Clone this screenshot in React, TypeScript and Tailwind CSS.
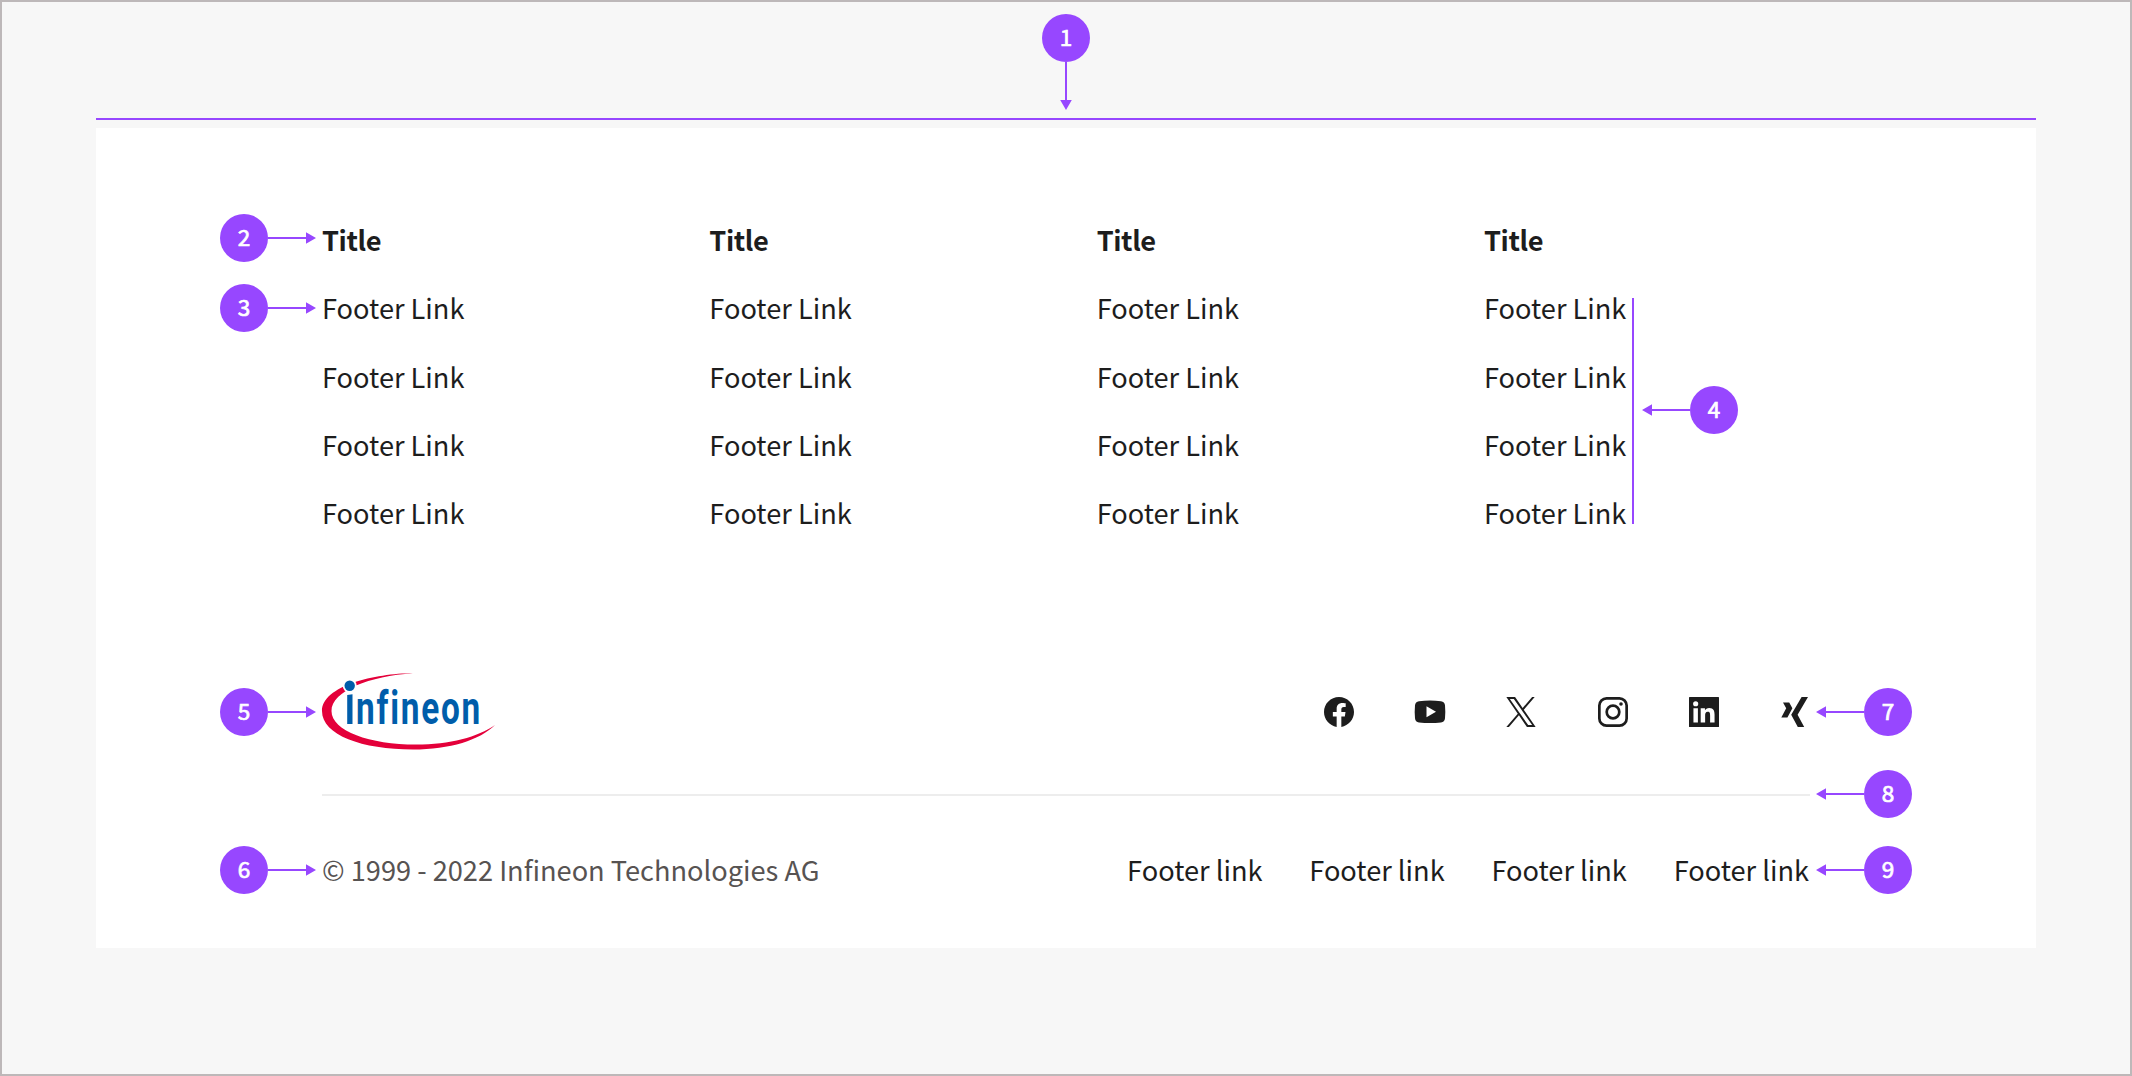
import React from "react";

const columns = [0, 1, 2, 3];
const links = [0, 1, 2, 3];

type Direction = "right" | "left" | "down";

function Arrow({ direction }: { direction: Direction }) {
  if (direction === "down") {
    return (
      <svg className="block" width="12" height="48" viewBox="0 0 12 48" fill="#9747ff">
        <path d="M5 0h2v38h4.8L6 48 .2 38H5z" />
      </svg>
    );
  }
  return (
    <svg
      className={direction === "left" ? "block rotate-180" : "block"}
      width="48"
      height="12"
      viewBox="0 0 48 12"
      fill="#9747ff"
    >
      <path d="M0 5v2h38v4.8L48 6 38 .2V5z" />
    </svg>
  );
}

function Marker({ n, direction, className }: { n: number; direction: Direction; className: string }) {
  const flow =
    direction === "down" ? "flex-col" : direction === "left" ? "flex-row-reverse" : "flex-row";
  return (
    <div className={`absolute flex items-center ${flow} ${className}`}>
      <span className="flex size-12 items-center justify-center rounded-full bg-[#9747ff] pb-[3px] text-[22.5px] leading-none text-white [-webkit-text-stroke:0.7px_#fff]">
        {n}
      </span>
      <Arrow direction={direction} />
    </div>
  );
}

function Logo() {
  return (
    <svg
      className="block overflow-visible"
      width="174"
      height="78"
      viewBox="22 24 174 78"
      aria-label="infineon"
    >
      <path
        fill="#e4003a"
        d="M113 24.3C75 24.3 22 37 22 62C22 86 62 100.5 113 100.5C150 100.5 180 91 195 76C178 88 150 95.6 116 95.6C70 95.6 31.5 82 31.5 62C31.5 42 70 27 113 24.3Z"
      />
      <circle cx="49.7" cy="36.7" r="7" fill="#fff" />
      <circle cx="49.7" cy="36.7" r="5.2" fill="#005daa" />
      <path fill="#005daa" d="M47.2 46l5.3-.8V75h-5.3z" />
      <text
        transform="translate(56 75) scale(0.71 1)"
        fill="#005daa"
        fontFamily="Roboto, sans-serif"
        fontWeight="700"
        fontSize="47"
        textLength="175"
        lengthAdjust="spacing"
        style={{ fontVariantLigatures: "none" }}
      >
        nfineon
      </text>
    </svg>
  );
}

function SocialIcons() {
  return (
    <div className="flex items-center gap-[61.2px] text-[#1d1d1d]">
      <svg className="size-[30px]" viewBox="0 0 24 24" fill="currentColor">
        <path d="M24 12.073c0-6.627-5.373-12-12-12s-12 5.373-12 12c0 5.99 4.388 10.954 10.125 11.854v-8.385H7.078v-3.47h3.047V9.43c0-3.007 1.792-4.669 4.533-4.669 1.312 0 2.686.235 2.686.235v2.953H15.83c-1.491 0-1.956.925-1.956 1.874v2.25h3.328l-.532 3.47h-2.796v8.385C19.612 23.027 24 18.062 24 12.073z" />
      </svg>
      <svg className="size-[30px] overflow-visible" viewBox="0 0 30 30" fill="currentColor">
        <path d="M4 4.2Q15 3 26 4.2Q29.6 4.6 30 8.2Q30.6 14.8 30 21.2Q29.6 25 26 25.4Q15 26.6 4 25.4Q.4 25 0 21.2Q-.6 14.8 0 8.2Q.4 4.6 4 4.2zM11.5 9.2v11L21 14.7z" fillRule="evenodd" />
      </svg>
      <svg className="size-[30px]" viewBox="0 0 1200 1227" fill="currentColor">
        <path d="M714.163 519.284L1160.89 0H1055.03L667.137 450.887L357.328 0H0L468.492 681.821L0 1226.37H105.866L515.491 750.218L842.672 1226.37H1200L714.137 519.284H714.163ZM569.165 687.828L521.697 619.934L144.011 79.6944H306.615L611.412 515.685L658.88 583.579L1055.08 1150.3H892.476L569.165 687.854V687.828Z" />
      </svg>
      <svg className="size-[30px]" viewBox="0 0 30 30" fill="none" stroke="currentColor" strokeWidth="2.7">
        <rect x="1.35" y="1.35" width="27.3" height="27.3" rx="7.2" />
        <circle cx="15" cy="15" r="6.3" />
        <circle cx="23" cy="7" r="1.8" fill="currentColor" stroke="none" />
      </svg>
      <svg className="size-[30px]" viewBox="0 0 24 24" fill="currentColor">
        <path d="M20.447 20.452h-3.554v-5.569c0-1.328-.027-3.037-1.852-3.037-1.853 0-2.136 1.445-2.136 2.939v5.667H9.351V9h3.414v1.561h.046c.477-.9 1.637-1.85 3.37-1.85 3.601 0 4.267 2.37 4.267 5.455v6.286zM5.337 7.433a2.062 2.062 0 1 1 0-4.125 2.062 2.062 0 0 1 0 4.125zm1.782 13.019H3.555V9h3.564v11.452zM23.5 0H.5a.5.5 0 0 0-.5.5v23a.5.5 0 0 0 .5.5h23a.5.5 0 0 0 .5-.5V.5a.5.5 0 0 0-.5-.5z" />
      </svg>
      <svg className="size-[30px]" viewBox="0 0 30 30" fill="currentColor">
        <path d="M21.6 0H28L17.6 17.8L24.2 30H17.8L11.2 17.8zM3 5.5H9.2L12.4 11.2L7.4 20.6H1.3L6.2 11.2z" />
      </svg>
    </div>
  );
}

export default function App() {
  return (
    <div className="relative flex h-[1076px] w-[2132px] flex-col border-2 border-[#bdb8b9] bg-[#f7f7f7] px-[94px] pt-[116px] font-['Noto_Sans_CJK_SC','Noto_Sans',sans-serif] text-[27.2px] text-[#1d1d1d]">
      <div className="h-0.5 w-full shrink-0 bg-[#9747ff]" />
      <footer className="mt-2 flex h-[820px] shrink-0 flex-col bg-white px-[226px] pt-[77px]">
        <div className="grid h-[468px] shrink-0 grid-cols-4 content-start gap-x-[61.3px]">
          {columns.map((c) => (
            <div key={c} className="flex flex-col leading-[68.33px]">
              <h3 className="font-bold tracking-[-0.4px]">Title</h3>
              {links.map((l) => (
                <a key={l}>Footer Link</a>
              ))}
            </div>
          ))}
        </div>
        <div className="flex h-[78px] shrink-0 items-center justify-between">
          <Logo />
          <SocialIcons />
        </div>
        <div className="mt-[43px] h-0.5 shrink-0 bg-[#ededed]" />
        <div className="mt-[39px] flex shrink-0 items-center justify-between leading-[68px]">
          <p className="text-[#575352]">© 1999 - 2022 Infineon Technologies AG</p>
          <nav className="flex gap-[46.8px] pr-px">
            {links.map((l) => (
              <a key={l}>Footer link</a>
            ))}
          </nav>
        </div>
      </footer>

      <div className="absolute top-[296px] left-[1630px] h-[226px] w-0.5 bg-[#9747ff]" />
      <Marker n={1} direction="down" className="top-[12px] left-[1040px]" />
      <Marker n={2} direction="right" className="top-[212px] left-[218px]" />
      <Marker n={3} direction="right" className="top-[282px] left-[218px]" />
      <Marker n={4} direction="left" className="top-[384px] left-[1640px]" />
      <Marker n={5} direction="right" className="top-[686px] left-[218px]" />
      <Marker n={6} direction="right" className="top-[844px] left-[218px]" />
      <Marker n={7} direction="left" className="top-[686px] left-[1814px]" />
      <Marker n={8} direction="left" className="top-[768px] left-[1814px]" />
      <Marker n={9} direction="left" className="top-[844px] left-[1814px]" />
    </div>
  );
}
